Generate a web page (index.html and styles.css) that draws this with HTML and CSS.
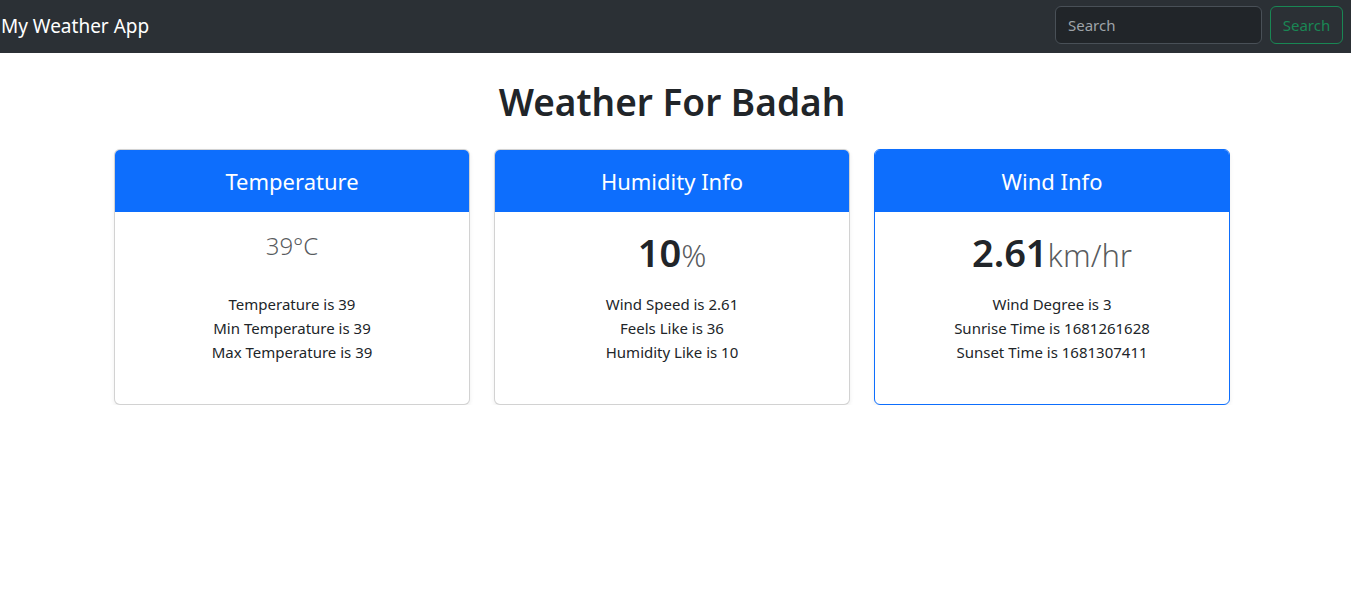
FILE: index.html
```html
<!DOCTYPE html>
<html lang="en">
<head>
<meta charset="utf-8">
<title>My Weather App</title>
<link rel="stylesheet" href="styles.css">
</head>
<body>
<nav class="navbar">
  <a class="brand" href="#">My Weather App</a>
  <form class="search-form">
    <input class="search-input" type="search" placeholder="Search">
    <button class="search-btn" type="button">Search</button>
  </form>
</nav>
<div class="page">
  <main class="container">
    <h1 class="title">Weather For Badah</h1>
    <div class="cards">
      <div class="card">
        <div class="card-header"><h4>Temperature</h4></div>
        <div class="card-body">
          <h1 class="card-value"><small class="unit unit-only">39°C</small></h1>
          <ul class="facts">
            <li>Temperature is 39</li>
            <li>Min Temperature is 39</li>
            <li>Max Temperature is 39</li>
          </ul>
        </div>
      </div>
      <div class="card">
        <div class="card-header"><h4>Humidity Info</h4></div>
        <div class="card-body">
          <h1 class="card-value">10<small class="unit">%</small></h1>
          <ul class="facts">
            <li>Wind Speed is 2.61</li>
            <li>Feels Like is 36</li>
            <li>Humidity Like is 10</li>
          </ul>
        </div>
      </div>
      <div class="card card-primary">
        <div class="card-header"><h4>Wind Info</h4></div>
        <div class="card-body">
          <h1 class="card-value">2.61<small class="unit">km/hr</small></h1>
          <ul class="facts">
            <li>Wind Degree is 3</li>
            <li>Sunrise Time is 1681261628</li>
            <li>Sunset Time is 1681307411</li>
          </ul>
        </div>
      </div>
    </div>
  </main>
</div>
</body>
</html>
```

FILE: styles.css
```css
* { box-sizing: border-box; }
html, body { margin: 0; padding: 0; }
body {
  font-family: "Noto Sans", "Open Sans", sans-serif;
  font-size: 16px;
  line-height: 1.5;
  color: #212529;
  background: #fff;
}

.navbar {
  display: flex;
  align-items: center;
  justify-content: space-between;
  background: #2b3035;
  padding: 5px 8px 8px 0;
  height: 53px;
}
.brand {
  color: #fff;
  text-decoration: none;
  font-size: 19px;
  line-height: 30px;
  padding-left: 1px;
  margin-top: 2px;
}
.search-form {
  display: flex;
  gap: 8px;
}
.search-input {
  width: 207px;
  height: 38px;
  background: #212529;
  border: 1px solid #495057;
  border-radius: 6px;
  padding: 6px 12px;
  color: #dee2e6;
  font-family: inherit;
  font-size: 15px;
  outline: none;
}
.search-input::placeholder { color: #9ea3a8; }
.search-btn {
  width: 73px;
  height: 38px;
  background: transparent;
  border: 1px solid #198754;
  border-radius: 6px;
  color: #198754;
  font-family: inherit;
  font-size: 15px;
  padding: 0;
}

.page { padding-right: 7px; }
.container {
  max-width: 1140px;
  margin: 0 auto;
  padding: 25px 12px 0;
}
.title {
  margin: 0 0 23px;
  text-align: center;
  font-size: 37px;
  line-height: 48px;
  font-weight: 600;
}

.cards {
  display: grid;
  grid-template-columns: repeat(3, 1fr);
  gap: 24px;
}
.card {
  border: 1px solid rgba(0,0,0,.175);
  border-radius: 6px;
  box-shadow: 0 2px 4px rgba(0,0,0,.075);
  text-align: center;
  overflow: hidden;
  background: #fff;
}
.card-primary { border-color: #0d6efd; }
.card-header {
  background: #0d6efd;
  color: #fff;
  padding: 17px 16px 15px;
  border-bottom: 1px solid #0d6efd;
}
.card-header h4 {
  margin: 0;
  font-size: 22px;
  line-height: 28.8px;
  font-weight: 400;
}
.card-body { padding: 16px; }
.card-value {
  margin: 0 0 8px;
  height: 48px;
  font-size: 38px;
  line-height: 48px;
  font-weight: 600;
}
.unit {
  font-size: 31px;
  line-height: 1;
  font-weight: 300;
  color: rgba(33,37,41,.75);
}
.unit-only {
  font-size: 24px;
  vertical-align: 12px;
}
.facts {
  list-style: none;
  padding: 0;
  margin: 16px 0 24px;
  font-size: 15px;
  line-height: 24px;
}
```
